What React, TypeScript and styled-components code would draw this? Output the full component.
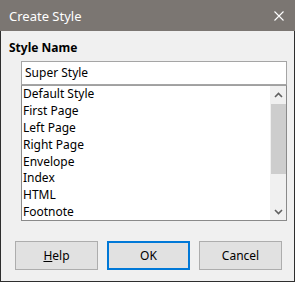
import styled, { createGlobalStyle } from "styled-components";

const Global = createGlobalStyle`
  html, body {
    margin: 0;
    padding: 0;
    background: #f0f0f0;
  }
  * {
    box-sizing: border-box;
  }
`;

const Windowbox = styled.div`
  width: 295px;
  height: 282px;
  display: flex;
  flex-direction: column;
  background: #f0f0f0;
  border: 1px solid #2e2e2e;
  border-top: none;
  font-family: "Noto Sans", "Liberation Sans", sans-serif;
  font-size: 12px;
  color: #000;
`;

const Titlebar = styled.div`
  height: 31px;
  margin: 0 -1px;
  background: #7b7672;
  color: #fff;
  display: flex;
  align-items: center;
  justify-content: space-between;
  padding: 0 11px 0 9px;
  font-size: 13px;
`;

const Body = styled.div`
  flex: 1;
  display: flex;
  flex-direction: column;
  padding: 8px 7px 0 8px;
`;

const Label = styled.div`
  font-weight: bold;
  font-size: 12px;
  height: 18px;
  line-height: 18px;
`;

const Fields = styled.div`
  display: flex;
  flex-direction: column;
  margin: 4px 0 0 12px;
  width: 266px;
`;

const Input = styled.div`
  height: 24px;
  border: 1px solid #a5a5a5;
  background: #fff;
  padding: 0 3px;
  line-height: 22px;
`;

const List = styled.div`
  height: 136px;
  border: 1px solid #8a8a8a;
  border-top-color: #a0a0a0;
  background: #fff;
  display: flex;
`;

const Items = styled.div`
  flex: 1;
  padding: 0 0 0 1px;
  overflow: hidden;
`;

const Item = styled.div`
  height: 16.9px;
  line-height: 16px;
  white-space: nowrap;
`;

const Scroll = styled.div`
  width: 16px;
  background: #f0f0f0;
  display: flex;
  flex-direction: column;
  align-items: center;
`;

const Arrow = styled.div`
  height: 17px;
  display: flex;
  align-items: center;
  justify-content: center;
`;

const Thumb = styled.div`
  width: 15px;
  height: 70px;
  margin-top: 1px;
  background: #cdcdcd;
`;

const Spacer = styled.div`
  flex: 1;
`;

const Buttons = styled.div`
  display: flex;
  gap: 9px;
  margin: 20px 0 0 6px;
`;

const Button = styled.div<{ $primary?: boolean }>`
  width: 83px;
  height: 29px;
  display: flex;
  align-items: center;
  justify-content: center;
  background: #e1e1e1;
  border: ${(p) => (p.$primary ? "2px solid #0078d7" : "1px solid #adadad")};
`;

const items = [
  "Default Style",
  "First Page",
  "Left Page",
  "Right Page",
  "Envelope",
  "Index",
  "HTML",
  "Footnote",
];

export default function App() {
  return (
    <>
      <Global />
      <Windowbox>
        <Titlebar>
          <span>Create Style</span>
          <svg width="10" height="10" viewBox="0 0 10 10">
            <path d="M0.5 0.5 L9.5 9.5 M9.5 0.5 L0.5 9.5" stroke="#fff" strokeWidth="1.1" />
          </svg>
        </Titlebar>
        <Body>
          <Label>Style Name</Label>
          <Fields>
            <Input>Super Style</Input>
            <List>
              <Items>
                {items.map((t) => (
                  <Item key={t}>{t}</Item>
                ))}
              </Items>
              <Scroll>
                <Arrow>
                  <svg width="9" height="6" viewBox="0 0 9 6">
                    <path d="M1 5 L4.5 1.5 L8 5" stroke="#606060" strokeWidth="1.6" fill="none" />
                  </svg>
                </Arrow>
                <Thumb />
                <Spacer />
                <Arrow>
                  <svg width="9" height="6" viewBox="0 0 9 6">
                    <path d="M1 1 L4.5 4.5 L8 1" stroke="#606060" strokeWidth="1.6" fill="none" />
                  </svg>
                </Arrow>
              </Scroll>
            </List>
          </Fields>
          <Buttons>
            <Button>
              <span>
                <u>H</u>elp
              </span>
            </Button>
            <Button $primary>OK</Button>
            <Button>Cancel</Button>
          </Buttons>
        </Body>
      </Windowbox>
    </>
  );
}
